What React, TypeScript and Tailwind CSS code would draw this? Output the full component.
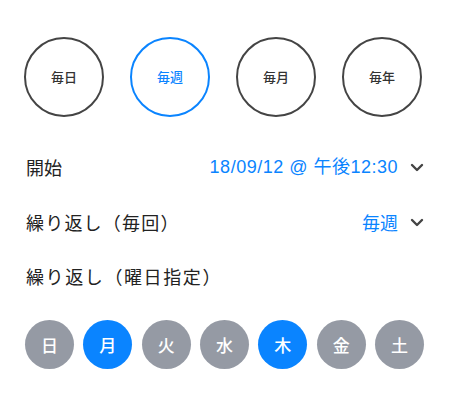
import { useState } from "react";

const frequencies = ["毎日", "毎週", "毎月", "毎年"];
const days = ["日", "月", "火", "水", "木", "金", "土"];

function Chevron() {
  return (
    <svg width="14" height="9" viewBox="0 0 14 9" className="ml-3 shrink-0">
      <path d="M2 2 L7 7 L12 2" fill="none" stroke="#444" strokeWidth="2.4" strokeLinecap="round" strokeLinejoin="round" />
    </svg>
  );
}

export default function App() {
  const [freq, setFreq] = useState("毎週");
  const [picked, setPicked] = useState<string[]>(["月", "木"]);

  const toggleDay = (d: string) =>
    setPicked((p) => (p.includes(d) ? p.filter((x) => x !== d) : [...p, d]));

  return (
    <div
      className="h-[415px] w-[450px] bg-white text-[#222]"
      style={{ fontFamily: '"Noto Sans CJK JP", "Liberation Sans", sans-serif' }}
    >
      <div className="flex gap-[26px] pl-6 pt-[37px]">
        {frequencies.map((f) => {
          const active = f === freq;
          return (
            <button
              key={f}
              onClick={() => setFreq(f)}
              className={`flex h-20 w-20 items-center justify-center rounded-full border-[2.5px] text-[13px] font-medium ${
                active ? "border-[#0a84ff] text-[#0a84ff]" : "border-[#444] text-[#333]"
              }`}
            >
              {f}
            </button>
          );
        })}
      </div>

      <div className="mt-[36px] flex h-[28px] items-center justify-between px-[26px] text-[18px]">
        <span>開始</span>
        <span
          className="flex items-center tracking-[0.5px] text-[#0a84ff]"
          style={{ fontFamily: '"Liberation Sans", "Noto Sans CJK JP", sans-serif' }}
        >
          18/09/12 @ 午後12:30
          <Chevron />
        </span>
      </div>

      <div className="mt-[27px] flex h-[28px] items-center justify-between px-[26px] text-[18px]">
        <span className="tracking-[1.2px]">繰り返し（毎回）</span>
        <span className="flex items-center text-[#0a84ff]">
          {freq}
          <Chevron />
        </span>
      </div>

      <div className="mt-[26px] flex h-[28px] items-center pl-[26px] text-[18px]">
        <span className="tracking-[1.6px]">繰り返し（曜日指定）</span>
      </div>

      <div className="mt-[30px] flex justify-between pl-[25px] pr-[26px]">
        {days.map((d) => {
          const on = picked.includes(d);
          return (
            <button
              key={d}
              onClick={() => toggleDay(d)}
              className={`flex h-[49px] w-[49px] items-center justify-center rounded-full text-[17px] font-medium text-white ${
                on ? "bg-[#0a84ff]" : "bg-[#959aa4]"
              }`}
            >
              {d}
            </button>
          );
        })}
      </div>
    </div>
  );
}
